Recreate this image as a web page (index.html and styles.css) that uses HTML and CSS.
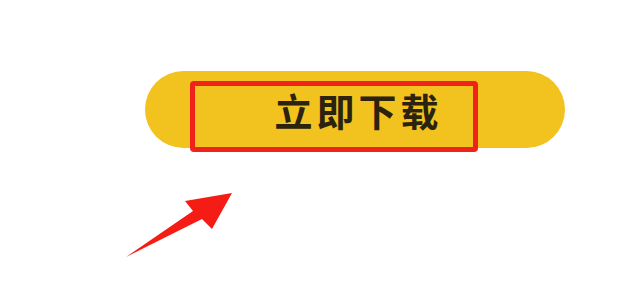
FILE: index.html
```html
<!DOCTYPE html>
<html lang="zh">
<head>
<meta charset="utf-8">
<link rel="stylesheet" href="styles.css">
</head>
<body>
<div class="page">
  <div class="pill">
    <span class="label">立即下载</span>
    <div class="highlight"></div>
  </div>
  <svg class="arrow" width="130" height="90" viewBox="120 180 130 90" xmlns="http://www.w3.org/2000/svg">
    <polygon points="126,257 193,211 185,201 232,193 212,229 202,219" fill="#f41c14"/>
  </svg>
</div>
</body>
</html>
```
FILE: styles.css
```css
html, body {
  margin: 0;
  padding: 0;
  background: #ffffff;
}
.page {
  position: relative;
  width: 620px;
  height: 294px;
  padding: 71px 0 0 145px;
  box-sizing: border-box;
  overflow: hidden;
}
.pill {
  position: relative;
  width: 420px;
  height: 77px;
  border-radius: 39px;
  background: #f2c21f;
  display: flex;
  align-items: center;
  justify-content: center;
}
.label {
  font-family: "Noto Sans CJK SC", "Noto Sans", sans-serif;
  font-weight: 700;
  font-size: 38px;
  letter-spacing: 4px;
  margin-right: -4px;
  margin-left: 3px;
  color: #2b230e;
  line-height: 1;
}
.highlight {
  position: absolute;
  left: 45px;
  top: 10px;
  width: 288px;
  height: 71px;
  box-sizing: border-box;
  border: 5px solid #f1221a;
  border-radius: 4px;
}
.arrow {
  position: absolute;
  left: 120px;
  top: 180px;
}
```
